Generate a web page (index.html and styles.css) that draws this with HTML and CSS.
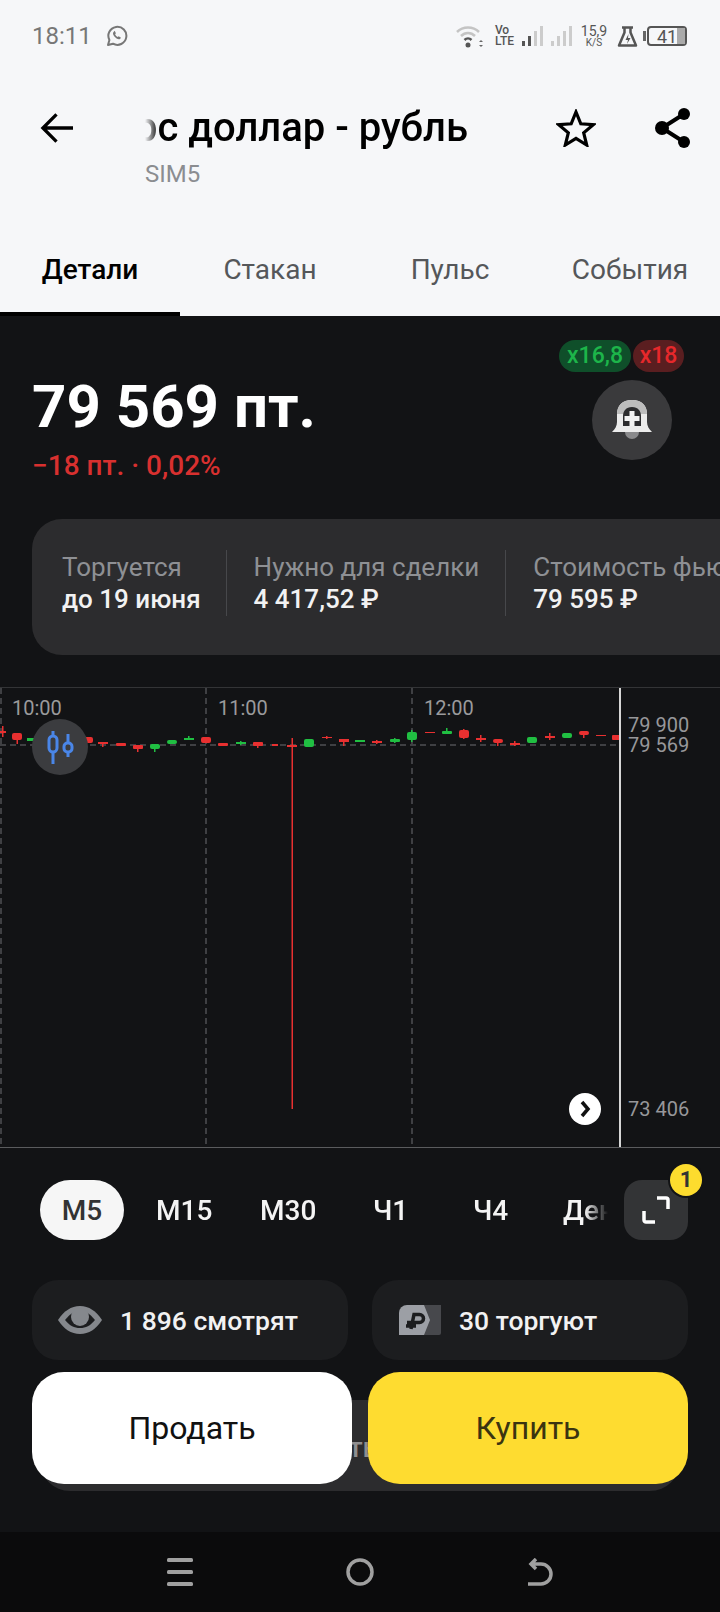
FILE: index.html
```html
<!DOCTYPE html>
<html lang="ru">
  <head>
    <meta charset="UTF-8" />
    <meta name="viewport" content="width=device-width, initial-scale=1" />
    <title>Курс доллар - рубль</title>
    <link rel="stylesheet" href="styles.css">
  </head>
  <body>
    <header class="top">
      <div class="status">
        <span class="clock">18:11</span>
        <svg class="wa" width="22" height="22" viewBox="0 0 22 22" fill="none" stroke="#777" stroke-width="2">
          <path d="M2 20l1.4-5A9 9 0 1 1 7 18.7z" stroke-linejoin="round"/>
          <path d="M8 6.500c-1.500 1-1.300 3 .4 5s4 3.500 5.600 2.500l1-1.300-2.300-1.400-1 .8c-1-.4-2.200-1.700-2.600-2.800l.8-1-1.200-2.500z" fill="#777" stroke="none"/>
        </svg>
        <div class="status-right">
          <svg width="29" height="24" viewBox="0 0 29 24" fill="none">
            <path d="M1 8c6-6 16-6 22 0" stroke="#c4c4c4" stroke-width="2.500"/>
            <path d="M5 12c4-4 10-4 14 0" stroke="#c4c4c4" stroke-width="2.500"/>
            <path d="M8.500 16c2-2 5-2 7 0" stroke="#555" stroke-width="2.500"/>
            <circle cx="12" cy="21" r="2.500" fill="#555"/>
            <path d="M25 16l2 2h-4zM25 23l2-2h-4z" fill="#666"/>
          </svg>
          <div class="volte"><span>Vo</span><span>LTE</span></div>
          <svg class="bars" width="22" height="22" viewBox="0 0 22 22">
            <rect x="0" y="16" width="3" height="5" fill="#555"/>
            <rect x="6" y="11" width="3" height="10" fill="#555"/>
            <rect x="12" y="6" width="3" height="15" fill="#ccc"/>
            <rect x="18" y="1" width="3" height="20" fill="#ccc"/>
          </svg>
          <svg class="bars" width="22" height="22" viewBox="0 0 22 22">
            <rect x="0" y="16" width="3" height="5" fill="#ccc"/>
            <rect x="6" y="11" width="3" height="10" fill="#ccc"/>
            <rect x="12" y="6" width="3" height="15" fill="#ccc"/>
            <rect x="18" y="1" width="3" height="20" fill="#ccc"/>
          </svg>
          <div class="speed"><span>15,9</span><small>K/S</small></div>
          <svg width="21" height="21" viewBox="0 0 21 21" fill="none">
            <path d="M5 1.500h11M7.500 1.500v5L2 19.500h17L13.500 6.500v-5" stroke="#555" stroke-width="2.500" stroke-linejoin="round"/>
            <path d="M11.500 8l-3 6h2.500l-1 4 3.500-6h-2.500z" fill="#555"/>
          </svg>
          <div class="battery">
            <span class="battery-nub"></span>
            <div class="battery-body"><span>41</span><i class="battery-fill"></i></div>
          </div>
        </div>
      </div>

      <div class="appbar">
        <svg class="back" width="33" height="32" viewBox="0 0 34 32" fill="none" stroke="#000" stroke-width="3.400">
          <path d="M17 2L3 16l14 14M3 16h31"/>
        </svg>
        <div class="titles">
          <div class="title"><span>Курс доллар - рубль</span></div>
          <div class="ticker">SIM5</div>
        </div>
        <svg class="star" width="40" height="38" viewBox="0 0 40 38" fill="none" stroke="#000" stroke-width="3.200" stroke-linejoin="miter">
          <path d="M20 3l4.800 11.800 12.500.9-9.600 8.100 3 12.200L20 29.400 9.300 36l3-12.200-9.600-8.100 12.500-.9z"/>
        </svg>
        <svg class="share" width="38" height="42" viewBox="0 0 38 42" fill="#000">
          <circle cx="30" cy="7" r="6"/>
          <circle cx="30" cy="35" r="6"/>
          <circle cx="8" cy="21" r="7"/>
          <path d="M8 21L30 7M8 21l22 14" stroke="#000" stroke-width="4"/>
        </svg>
      </div>

      <nav class="tabs">
        <a class="tab active">Детали</a>
        <a class="tab">Стакан</a>
        <a class="tab">Пульс</a>
        <a class="tab">События</a>
      </nav>
    </header>

    <main class="content">
      <section class="quote">
        <div class="quote-main">
          <div class="price">79 569 пт.</div>
          <div class="change">−18 пт. · 0,02%</div>
        </div>
        <div class="quote-side">
          <div class="badges">
            <span class="badge green">x16,8</span>
            <span class="badge red">x18</span>
          </div>
          <button class="bell">
            <svg width="40" height="40" viewBox="0 0 40 40">
              <path d="M20 0C10 0 5 6 5 14v8c0 4-2 7-5 10h40c-3-3-5-6-5-10v-8C35 6 30 0 20 0z" fill="#ececec"/>
              <path d="M20 0C10 0 5 6 5 14h30C35 6 30 0 20 0z" fill="#bdbdbd"/>
              <path d="M20 7c-6 0-9 4-9 9v10h18V16c0-5-3-9-9-9z" fill="#2c2c2e"/>
              <path d="M17.500 11h5v5h5v5h-5v5h-5v-5h-5v-5h5z" fill="#f2f2f2"/>
              <path d="M13 32h14a7 7 0 0 1-14 0z" fill="#8a8a8c"/>
            </svg>
          </button>
        </div>
      </section>

      <section class="info">
        <div class="info-item first">
          <div class="info-label">Торгуется</div>
          <div class="info-value">до 19 июня</div>
        </div>
        <div class="info-item">
          <div class="info-label">Нужно для сделки</div>
          <div class="info-value">4 417,52 ₽</div>
        </div>
        <div class="info-item">
          <div class="info-label">Стоимость фьючерса</div>
          <div class="info-value">79 595 ₽</div>
        </div>
      </section>

      <section class="chart">
        <div class="plot">
          <svg class="candles" width="619" height="459" viewBox="0 688 619 459">
            <g class="grid">
              <path d="M1 688V1147M206 688V1147M412 688V1147"/>
              <path d="M0 745H620"/>
            </g>
            <g class="down">
              <rect x="0" y="731" width="6" height="2"/><rect x="2" y="726" width="1.500" height="11"/>
              <rect x="12" y="733" width="10" height="7" rx="2"/><rect x="16.500" y="738" width="1.500" height="6"/>
              <rect x="83" y="737" width="10" height="6" rx="2"/>
              <rect x="98" y="742" width="10" height="2"/><rect x="102" y="742" width="1.500" height="5"/>
              <rect x="116" y="743" width="10" height="3" rx="1"/>
              <rect x="133" y="745" width="10" height="4" rx="1"/><rect x="137" y="747" width="1.500" height="5"/>
              <rect x="201" y="737" width="10" height="6" rx="2"/>
              <rect x="218" y="743" width="10" height="3" rx="1"/>
              <rect x="253" y="742" width="10" height="4" rx="1"/><rect x="257" y="744" width="1.500" height="4"/>
              <rect x="272" y="744" width="6" height="2"/>
              <rect x="287" y="745" width="10" height="2"/>
              <rect x="291.500" y="738" width="1.500" height="371"/>
              <rect x="322" y="737" width="10" height="1"/><rect x="326" y="736" width="1.500" height="3"/>
              <rect x="339" y="739" width="10" height="3"/><rect x="343" y="740" width="1.500" height="6"/>
              <rect x="372" y="741" width="10" height="2"/><rect x="376" y="740" width="1.500" height="4"/>
              <rect x="425" y="732" width="10" height="1"/>
              <rect x="459" y="730" width="10" height="8" rx="2"/><rect x="463" y="729" width="1.500" height="10"/>
              <rect x="476" y="738" width="10" height="2"/><rect x="480" y="735" width="1.500" height="7"/>
              <rect x="493" y="739" width="10" height="4" rx="2"/><rect x="497" y="742" width="1.500" height="4"/>
              <rect x="510" y="743" width="10" height="2"/><rect x="514" y="741" width="1.500" height="5"/>
              <rect x="545" y="736" width="10" height="2"/><rect x="549" y="733" width="1.500" height="7"/>
              <rect x="579" y="731" width="10" height="4" rx="2"/><rect x="583" y="733" width="1.500" height="5"/>
              <rect x="596" y="735" width="10" height="1"/>
              <rect x="612" y="735" width="8" height="5" rx="1"/>
            </g>
            <g class="up">
              <rect x="27" y="738" width="10" height="3"/>
              <rect x="150" y="744" width="10" height="5" rx="2"/><rect x="154" y="746" width="1.500" height="6"/>
              <rect x="167" y="740" width="10" height="4" rx="2"/>
              <rect x="184" y="738" width="10" height="2"/><rect x="188" y="736" width="1.500" height="4"/>
              <rect x="236" y="742" width="10" height="2"/><rect x="240" y="741" width="1.500" height="4"/>
              <rect x="304" y="739" width="10" height="8" rx="2"/>
              <rect x="355" y="740" width="10" height="2"/>
              <rect x="390" y="739" width="10" height="3" rx="1"/><rect x="394" y="738" width="1.500" height="5"/>
              <rect x="407" y="732" width="10" height="8" rx="2"/><rect x="411" y="730" width="1.500" height="12"/>
              <rect x="442" y="731" width="10" height="3" rx="1"/><rect x="446" y="728" width="1.500" height="6"/>
              <rect x="527" y="737" width="10" height="6" rx="2"/>
              <rect x="562" y="733" width="10" height="5" rx="2"/>
            </g>
          </svg>
          <span class="time t1">10:00</span>
          <span class="time t2">11:00</span>
          <span class="time t3">12:00</span>
          <button class="candle-toggle">
            <svg width="28" height="36" viewBox="0 0 28 36" fill="none" stroke="#4a86e8" stroke-width="3">
              <path d="M7 2v5M7 23v12M22 5v9M22 23v5"/>
              <rect x="3" y="7" width="8" height="16" rx="4"/>
              <rect x="18" y="14" width="8" height="9" rx="3.500"/>
            </svg>
          </button>
          <button class="scroll-end">
            <svg width="14" height="18" viewBox="0 0 14 18" fill="none" stroke="#111" stroke-width="3.500">
              <path d="M4 2l6 7-6 7"/>
            </svg>
          </button>
        </div>
        <div class="axis">
          <span class="axis-label a1">79 900</span>
          <span class="axis-label a2">79 569</span>
          <span class="axis-label a3">73 406</span>
        </div>
      </section>

      <section class="periods">
        <div class="period-list">
          <span class="period current">М5</span>
          <span class="period p15">М15</span>
          <span class="period p30">М30</span>
          <span class="period p1">Ч1</span>
          <span class="period p4">Ч4</span>
          <span class="period day">День</span>
        </div>
        <button class="expand">
          <svg width="28" height="28" viewBox="0 0 28 28" fill="none" stroke="#fff" stroke-width="3.500">
            <path d="M15 2h9a2 2 0 0 1 2 2v9M13 26H4a2 2 0 0 1-2-2v-9"/>
          </svg>
          <span class="expand-count">1</span>
        </button>
      </section>

      <section class="stats">
        <div class="stat">
          <svg class="stat-eye" width="44" height="28" viewBox="0 0 44 28">
            <path d="M0 14C6 5 13 0 22 0s16 5 22 14c-6 9-13 14-22 14S6 23 0 14z" fill="#85888d"/>
            <path d="M7 14c5-6 9-9 15-9s10 3 15 9c-5 6-9 8-15 8S12 20 7 14z" fill="#1c1d1f"/>
            <circle cx="22" cy="11" r="9" fill="#85888d"/>
          </svg>
          <span>1 896 смотрят</span>
        </div>
        <div class="stat">
          <svg class="stat-rub" width="42" height="30" viewBox="0 0 42 30">
            <path d="M22 0h20v28a2 2 0 0 1-2 2H22z" fill="#47484c"/>
            <path d="M8 0h17l6 15-6 15H0V8a8 8 0 0 1 8-8z" fill="#9c9fa5"/>
            <path d="M12 24l3-14.500h5.500a4 4 0 0 1 0 8H8M7 21h10" fill="none" stroke="#1c1d1f" stroke-width="3.500"/>
          </svg>
          <span>30 торгуют</span>
        </div>
      </section>

      <section class="deal">
        <div class="deal-back"><span>Торговать</span></div>
        <div class="deal-buttons">
          <button class="deal-btn sell">Продать</button>
          <button class="deal-btn buy">Купить</button>
        </div>
      </section>
    </main>

    <footer class="navbar">
      <svg width="26" height="28" viewBox="0 0 26 28" fill="#a0a0a0">
        <rect width="26" height="4" rx="1.500"/>
        <rect y="12" width="26" height="4" rx="1.500"/>
        <rect y="24" width="26" height="4" rx="1.500"/>
      </svg>
      <svg width="28" height="28" viewBox="0 0 28 28" fill="none" stroke="#a0a0a0" stroke-width="3.500">
        <circle cx="14" cy="14" r="12"/>
      </svg>
      <svg width="26" height="28" viewBox="0 0 26 28" fill="none" stroke="#a0a0a0" stroke-width="3.500">
        <path d="M1 26h13a10 10 0 0 0 0-20H4M9 1L4 6l5 5"/>
      </svg>
    </footer>
  </body>
</html>
```

FILE: styles.css
```css
/* Reset and base */
* {
  box-sizing: border-box;
}
html {
  overflow: hidden;
}
body {
  font-family: Roboto, "Noto Sans", sans-serif;
  background: #121315;
  margin: 0;
  width: 720px;
  height: 1612px;
  overflow: hidden;
  color: #fff;
  display: flex;
  flex-direction: column;
}
button {
  border: none;
  padding: 0;
  font-family: inherit;
  cursor: pointer;
}

/* Light header */
.top {
  background: #f6f7f9;
  height: 316px;
  flex-shrink: 0;
}
.status {
  height: 72px;
  padding: 0 33px 0 32px;
  display: flex;
  align-items: center;
  color: #777;
}
.clock {
  font-size: 24px;
}
.wa {
  margin-left: 14px;
}
.status-right {
  margin-left: auto;
  display: flex;
  align-items: center;
}
.volte {
  margin-left: 10px;
  display: flex;
  flex-direction: column;
  font-size: 12px;
  line-height: 11px;
  font-weight: 500;
  color: #555;
}
.bars {
  margin-left: 8px;
}
.bars + .bars {
  margin-left: 7px;
}
.speed {
  margin-left: 7px;
  width: 28px;
  display: flex;
  flex-direction: column;
  align-items: center;
  font-size: 14px;
  line-height: 13px;
  color: #555;
}
.speed small {
  font-size: 10px;
  line-height: 9px;
}
.speed + svg {
  margin-left: 9px;
}
.battery {
  margin-left: 5px;
  display: flex;
  align-items: center;
}
.battery-nub {
  width: 3px;
  height: 10px;
  background: #666;
  margin-right: 1px;
}
.battery-body {
  width: 40px;
  height: 20px;
  border: 2px solid #555;
  border-radius: 4px;
  display: flex;
  align-items: center;
  font-size: 18px;
  color: #555;
  padding-left: 8px;
}
.battery-fill {
  margin-left: auto;
  width: 14px;
  height: 16px;
  background: #aaa;
}

.appbar {
  height: 124px;
  padding-top: 24px;
  display: flex;
  align-items: flex-start;
}
.back {
  margin: 16px 0 0 40px;
}
.titles {
  margin-left: 72px;
  width: 323px;
}
.title {
  margin-top: 9px;
  display: flex;
  justify-content: flex-end;
  overflow: hidden;
  height: 46px;
  font-size: 40px;
  line-height: 46px;
  font-weight: 500;
  color: #000;
  white-space: nowrap;
  -webkit-mask-image: linear-gradient(90deg, transparent 0, #000 14px);
  mask-image: linear-gradient(90deg, transparent 0, #000 14px);
}
.title span {
  flex-shrink: 0;
}
.ticker {
  margin-top: 8px;
  font-size: 24px;
  line-height: 30px;
  color: #8b8d91;
}
.star {
  margin: 13px 0 0 88px;
}
.share {
  margin: 11px 0 0 58px;
}
.tabs {
  height: 120px;
  display: grid;
  grid-template-columns: repeat(4, 180px);
}
.tab {
  height: 120px;
  padding-top: 58px;
  text-align: center;
  font-size: 28px;
  line-height: 32px;
  color: #55575a;
}
.tab.active {
  color: #000;
  font-weight: 500;
  border-bottom: 4px solid #000;
}

/* Dark content */
.content {
  flex: 1;
  min-height: 0;
  overflow: hidden;
}
.quote {
  height: 203px;
  padding-left: 32px;
  display: flex;
  justify-content: space-between;
}
.quote-main {
  padding-top: 55px;
}
.price {
  font-size: 60px;
  line-height: 72px;
  font-weight: 700;
  white-space: nowrap;
}
.change {
  margin-top: 7px;
  font-size: 28px;
  line-height: 32px;
  font-weight: 500;
  color: #d8302f;
}
.quote-side {
  width: 128px;
  margin-right: 36px;
  padding-top: 24px;
  display: flex;
  flex-direction: column;
  align-items: flex-end;
}
.badges {
  display: flex;
  gap: 2px;
}
.badge {
  height: 32px;
  line-height: 32px;
  border-radius: 16px;
  font-size: 23px;
  font-weight: 500;
  text-align: center;
}
.badge.green {
  width: 72px;
  background: #0f4f2a;
  color: #1db54a;
}
.badge.red {
  width: 51px;
  background: #5a1e20;
  color: #e6282b;
}
.bell {
  margin: 8px 12px 0 0;
  width: 80px;
  height: 80px;
  border-radius: 50%;
  background: #3a3a3c;
  display: flex;
  align-items: center;
  justify-content: center;
}
.info {
  margin-left: 32px;
  width: 760px;
  height: 136px;
  border-radius: 30px;
  background: #2c2c2e;
  display: flex;
  align-items: center;
}
.info-item {
  height: 66px;
  margin-bottom: 8px;
  padding-left: 27px;
  padding-right: 26px;
  white-space: nowrap;
  border-left: 1px solid #47484b;
  display: flex;
  flex-direction: column;
  justify-content: center;
}
.info-item.first {
  border-left: none;
  padding-left: 30px;
  padding-right: 25px;
}
.info-label {
  font-size: 26px;
  line-height: 32px;
  color: #8e9094;
}
.info-value {
  font-size: 26px;
  line-height: 32px;
  font-weight: 500;
  color: #f2f2f2;
}

/* Chart */
.chart {
  margin-top: 32px;
  height: 461px;
  border-top: 1px solid #333436;
  border-bottom: 1px solid #5a5b5d;
  display: flex;
}
.plot {
  position: relative;
  width: 621px;
  border-right: 2px solid #d6d6d6;
}
.candles {
  display: block;
}
.grid path {
  stroke: #3f4043;
  stroke-width: 2;
  stroke-dasharray: 6 4;
  fill: none;
}
.down rect {
  fill: #e83030;
}
.up rect {
  fill: #20bf42;
}
.time {
  position: absolute;
  top: 8px;
  font-size: 20px;
  line-height: 24px;
  color: #9a9a9c;
}
.t1 {
  left: 12px;
}
.t2 {
  left: 218px;
}
.t3 {
  left: 424px;
}
.candle-toggle {
  position: absolute;
  left: 32px;
  top: 31px;
  width: 56px;
  height: 56px;
  border-radius: 50%;
  background: #3b3c3f;
  display: flex;
  align-items: center;
  justify-content: center;
}
.scroll-end {
  position: absolute;
  left: 569px;
  top: 405px;
  width: 32px;
  height: 32px;
  border-radius: 50%;
  background: #fff;
  display: flex;
  align-items: center;
  justify-content: center;
}
.axis {
  position: relative;
  flex: 1;
}
.axis-label {
  position: absolute;
  left: 7px;
  font-size: 20px;
  line-height: 24px;
  color: #97979a;
  white-space: nowrap;
}
.a1 {
  top: 25px;
}
.a2 {
  top: 45px;
}
.a3 {
  top: 409px;
}

/* Period switch */
.periods {
  margin-top: 32px;
  height: 60px;
  padding: 0 32px 0 40px;
  display: flex;
  justify-content: space-between;
}
.period-list {
  position: relative;
  width: 572px;
  overflow: hidden;
  -webkit-mask-image: linear-gradient(90deg, #000 545px, transparent 568px);
  mask-image: linear-gradient(90deg, #000 545px, transparent 568px);
}
.period {
  position: absolute;
  top: 0;
  height: 60px;
  line-height: 62px;
  font-size: 28px;
  font-weight: 500;
  white-space: nowrap;
  color: #f4f4f4;
}
.current {
  left: 0;
  width: 84px;
  text-align: center;
  border-radius: 30px;
  background: #f6f6f6;
  color: #333;
}
.p15 {
  left: 116px;
}
.p30 {
  left: 220px;
}
.p1 {
  left: 333px;
}
.p4 {
  left: 433px;
}
.day {
  left: 523px;
}
.expand {
  position: relative;
  width: 64px;
  height: 60px;
  border-radius: 18px;
  background: #333436;
  display: flex;
  align-items: center;
  justify-content: center;
}
.expand-count {
  position: absolute;
  right: -14px;
  top: -16px;
  width: 32px;
  height: 32px;
  border-radius: 50%;
  background: #fddc2e;
  box-shadow: 0 0 0 2px #121315;
  color: #333;
  font-size: 22px;
  font-weight: 700;
  line-height: 32px;
  text-align: center;
}
.stats {
  margin: 40px 32px 0;
  display: grid;
  grid-template-columns: 316px 316px;
  gap: 24px;
}
.stat {
  height: 80px;
  border-radius: 26px;
  background: #1c1d1f;
  display: flex;
  align-items: center;
  font-size: 26.500px;
  font-weight: 500;
  color: #f2f2f2;
}
.stat-eye {
  margin: 0 18px 0 26px;
}
.stat-rub {
  margin: 0 18px 0 27px;
}

/* Buy and sell */
.deal {
  position: relative;
  margin: 40px 32px 0;
  height: 91px;
}
.deal-back {
  position: absolute;
  left: 8px;
  right: 8px;
  top: 0;
  bottom: 0;
  padding-right: 302px;
  border-radius: 0 0 30px 30px;
  background: #2c2c2e;
  color: #8e8e90;
  font-size: 28px;
  font-weight: 500;
  line-height: 96px;
  text-align: right;
}
.deal-buttons {
  position: absolute;
  left: 0;
  right: 0;
  top: -28px;
  display: grid;
  grid-template-columns: 320px 320px;
  gap: 16px;
}
.deal-btn {
  height: 112px;
  border-radius: 32px;
  font-size: 32px;
}
.sell {
  background: #fff;
  color: #111;
}
.buy {
  background: #fedc30;
  color: #3b3410;
}

/* System navigation */
.navbar {
  height: 80px;
  flex-shrink: 0;
  background: #0b0b0c;
  padding: 0 167px 0 167px;
  display: flex;
  align-items: center;
  justify-content: space-between;
}
```
